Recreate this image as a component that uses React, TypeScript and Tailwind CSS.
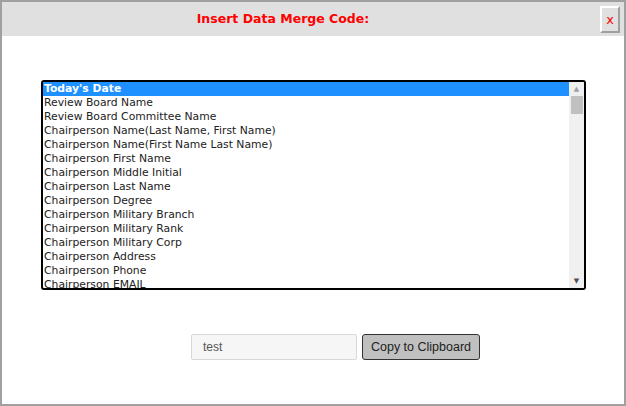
const items = [
  "Today's Date",
  'Review Board Name',
  'Review Board Committee Name',
  'Chairperson Name(Last Name, First Name)',
  'Chairperson Name(First Name Last Name)',
  'Chairperson First Name',
  'Chairperson Middle Initial',
  'Chairperson Last Name',
  'Chairperson Degree',
  'Chairperson Military Branch',
  'Chairperson Military Rank',
  'Chairperson Military Corp',
  'Chairperson Address',
  'Chairperson Phone',
  'Chairperson EMAIL',
  'Chairperson Fax',
]

export default function App() {
  return (
    <div className="w-[626px] h-[406px] border-2 border-[#a0a0a0] bg-white flex flex-col overflow-hidden" style={{ fontFamily: '"DejaVu Sans", sans-serif' }}>
      <div className="h-[34px] bg-[#e0e0e0] flex items-center relative shrink-0">
        <div className="w-[562px] text-center text-[12.5px] font-bold text-[#ff0000]">Insert Data Merge Code:</div>
        <button className="absolute right-[4px] top-[4px] w-[20px] h-[27px] bg-[#e0e0e0] border-2 border-t-white border-l-white border-r-[#a0a0a0] border-b-[#a0a0a0] text-[#ff0000] text-[13px]">x</button>
      </div>
      <div className="pt-[44px] pl-[39px]">
        <div className="w-[545px] h-[210px] border-2 border-black rounded-[3px] flex overflow-hidden">
          <div className="flex-1 overflow-hidden text-[10.8px] leading-[14px] text-[#222]">
            {items.map((t, i) => (
              <div key={i} className={i === 0 ? 'bg-[#1e90ff] text-white font-bold px-[1px]' : 'px-[1px]'}>{t}</div>
            ))}
          </div>
          <div className="w-[15px] bg-[#f0f0f0] flex flex-col items-center">
            <div className="h-[14px] flex items-center text-[#a0a0a0] text-[7px]">▲</div>
            <div className="w-[12px] h-[18px] bg-[#c0c0c0]"></div>
            <div className="flex-1"></div>
            <div className="h-[14px] flex items-center text-[#505050] text-[7px]">▼</div>
          </div>
        </div>
      </div>
      <div className="pt-[44px] pl-[189px] flex gap-[5px]" style={{ fontFamily: '"Liberation Sans", Arial, sans-serif' }}>
        <div className="w-[166px] h-[26px] border border-[#d8d8d8] bg-[#f6f6f6] rounded-[2px] text-[12px] text-[#555] flex items-center pl-[11px]">test</div>
        <button className="w-[118px] h-[26px] bg-[#c0c0c0] border border-[#333] rounded-[3px] text-[12.5px] text-[#222]">Copy to Clipboard</button>
      </div>
    </div>
  )
}
